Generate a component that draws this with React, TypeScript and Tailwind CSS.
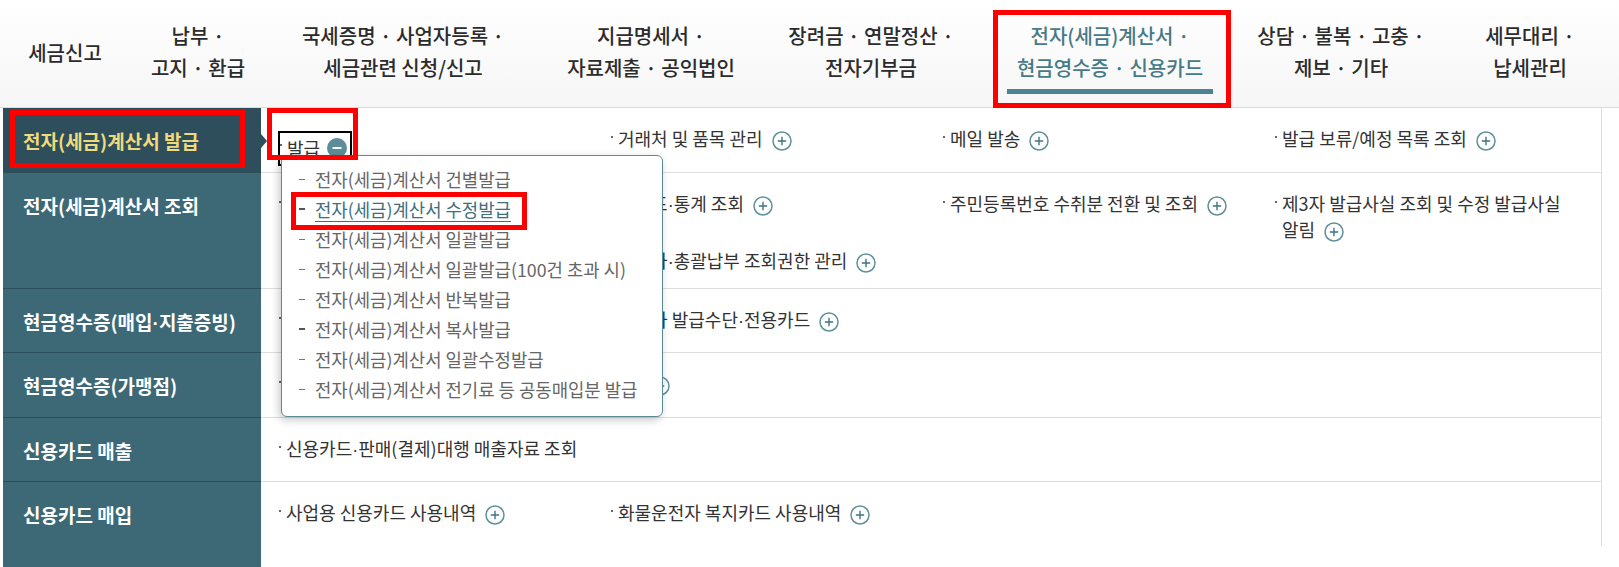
import React from "react";

const Dot = () => <span className="font-['Liberation_Sans',sans-serif]">·</span>;

const Plus = () => (
  <svg width="20" height="20" viewBox="0 0 20 20" className="ml-[9px] inline-block align-[-5px]">
    <circle cx="10" cy="10" r="9" fill="white" stroke="#5e909c" strokeWidth="1.5" />
    <path d="M10 5.8v8.4M5.8 10h8.4" stroke="#3f7482" strokeWidth="1.4" />
  </svg>
);

const Minus = () => (
  <svg width="20" height="20" viewBox="0 0 20 20" className="ml-[7px] shrink-0">
    <circle cx="10" cy="10" r="10" fill="#5b8e99" />
    <path d="M5.5 10h9" stroke="white" strokeWidth="2" />
  </svg>
);

function withDots(text: string) {
  const parts = text.split("·");
  return parts.map((p, i) => (
    <React.Fragment key={i}>
      {p}
      {i < parts.length - 1 && <Dot />}
    </React.Fragment>
  ));
}

function Item({ text, plus = true, nowrap = false }: { text: string; plus?: boolean; nowrap?: boolean }) {
  return (
    <div className="flex items-start">
      <span className="mr-[5px] mt-[11px] h-[2px] w-[2px] shrink-0 bg-[#666]" />
      <span className={`break-keep pr-[20px] leading-[26px] ${nowrap ? "whitespace-nowrap" : ""}`}>
        {withDots(text)}
        {plus && <Plus />}
      </span>
    </div>
  );
}

function HeadItem({ w, lines, active = false }: { w: string; lines: string[]; active?: boolean }) {
  return (
    <div className={`flex shrink-0 flex-col items-center ${w} ${lines.length === 1 ? "pt-[37px]" : "pt-[20px]"}`}>
      {lines.map((l, i) => (
        <span key={i} className={`whitespace-nowrap text-[20px] leading-[32px] font-medium ${active ? "text-[#467a87]" : "text-[#2b2b2b]"}`}>
          {l}
        </span>
      ))}
      {active && <span className="mt-[5px] h-[5px] w-[206px] bg-[#4b8390]" />}
    </div>
  );
}

function Row({
  h,
  label,
  active = false,
  last = false,
  children,
}: {
  h: string;
  label: string;
  active?: boolean;
  last?: boolean;
  children?: React.ReactNode;
}) {
  return (
    <div className={`flex ${h}`}>
      <div
        className={`relative w-[258px] shrink-0 pl-[20px] pt-[20px] text-[19px] font-bold leading-[26px] ${
          active ? "bg-[#2d4e5a] text-[#f0da7c]" : "bg-[#3d6875] text-white"
        } ${last ? "" : "border-b border-[#2c4f5b]"}`}
      >
        {withDots(label)}
        {active && (
          <span className="absolute right-[-6px] top-[26px] h-0 w-0 border-y-[7px] border-l-[6px] border-y-transparent border-l-[#2d4e5a]" />
        )}
      </div>
      <div className={`w-[1341px] border-r border-[#dddddd] pl-[18px] pt-[17px] text-[18px] text-[#333] ${last ? "" : "border-b"}`}>
        <div className="grid grid-cols-[332px_332px_332px_1fr]">{children}</div>
      </div>
    </div>
  );
}

export default function App() {
  return (
    <div className="relative h-[567px] w-[1619px] overflow-hidden bg-white font-['Noto_Sans_CJK_KR','Noto_Sans',sans-serif]">
      <header className="flex h-[108px] border-b border-[#dcdcdc] bg-linear-to-b from-white to-[#f6f6f6]">
        <HeadItem w="w-[130px]" lines={["세금신고"]} />
        <HeadItem w="w-[136px]" lines={["납부 ·", "고지 · 환급"]} />
        <HeadItem w="w-[274px]" lines={["국세증명 · 사업자등록 ·", "세금관련 신청/신고"]} />
        <HeadItem w="w-[222px]" lines={["지급명세서 ·", "자료제출 · 공익법인"]} />
        <HeadItem w="w-[218px]" lines={["장려금 · 연말정산 ·", "전자기부금"]} />
        <HeadItem w="w-[260px]" lines={["전자(세금)계산서 ·", "현금영수증 · 신용카드"]} active />
        <HeadItem w="w-[202px]" lines={["상담 · 불복 · 고충 ·", "제보 · 기타"]} />
        <HeadItem w="w-[176px]" lines={["세무대리 ·", "납세관리"]} />
      </header>

      <div className="flex">
        <div className="w-[3px] shrink-0" />
        <div className="w-[1599px]">
          <Row h="h-[65px]" label="전자(세금)계산서 발급" active>
            <div>
              <div className="-ml-[1px] -mt-[6px] inline-flex h-[35px] items-center border-2 border-black pr-[3px]">
                <span className="mb-[6px] mr-[5px] h-[2px] w-[2px] shrink-0 bg-[#666]" />
                <span className="leading-[26px]">발급</span>
                <Minus />
              </div>
            </div>
            <div>
              <Item text="거래처 및 품목 관리" />
            </div>
            <div>
              <Item text="메일 발송" />
            </div>
            <div>
              <Item text="발급 보류/예정 목록 조회" />
            </div>
          </Row>
          <Row h="h-[116px]" label="전자(세금)계산서 조회">
            <div>
              <Item text="목록조회" />
            </div>
            <div className="flex flex-col gap-[29px]">
              <Item text="합계표·통계 조회" />
              <Item text="사업자·총괄납부 조회권한 관리" />
            </div>
            <div>
              <Item text="주민등록번호 수취분 전환 및 조회" />
            </div>
            <div>
              <Item text="제3자 발급사실 조회 및 수정 발급사실 알림" />
            </div>
          </Row>
          <Row h="h-[64px]" label="현금영수증(매입·지출증빙)">
            <div>
              <Item text="현금영수증 조회" />
            </div>
            <div>
              <Item text="사업자 발급수단·전용카드" />
            </div>
          </Row>
          <Row h="h-[65px]" label="현금영수증(가맹점)">
            <div>
              <Item text="현금영수증 가맹점 발급수단 등록 및 발급분 조회" nowrap />
            </div>
          </Row>
          <Row h="h-[64px]" label="신용카드 매출">
            <div className="col-span-2">
              <Item text="신용카드·판매(결제)대행 매출자료 조회" plus={false} />
            </div>
          </Row>
          <Row h="h-[64px]" label="신용카드 매입" last>
            <div>
              <Item text="사업용 신용카드 사용내역" />
            </div>
            <div>
              <Item text="화물운전자 복지카드 사용내역" />
            </div>
          </Row>
          <div className="flex h-[21px]">
            <div className="w-[258px] bg-[#3d6875]" />
          </div>
        </div>
      </div>

      {/* dropdown menu */}
      <div className="absolute left-[281px] top-[155px] z-10 h-[262px] w-[382px] rounded-[6px] border border-[#5b8b97] bg-white pt-[8px] shadow-[-2px_3px_8px_rgba(0,0,0,0.22)]">
        {[
          "전자(세금)계산서 건별발급",
          "전자(세금)계산서 수정발급",
          "전자(세금)계산서 일괄발급",
          "전자(세금)계산서 일괄발급(100건 초과 시)",
          "전자(세금)계산서 반복발급",
          "전자(세금)계산서 복사발급",
          "전자(세금)계산서 일괄수정발급",
          "전자(세금)계산서 전기료 등 공동매입분 발급",
        ].map((t, i) => (
          <div key={i} className="flex h-[30px] items-center pl-[17px]">
            <span className={`mr-[10px] w-[6px] shrink-0 ${i === 1 || i === 5 ? "h-[2px] bg-[#555]" : "h-[1px] bg-[#777]"}`} />
            <span
              className={`whitespace-nowrap text-[17.8px] leading-[30px] ${
                i === 1 ? "text-[#3e6f7c] underline decoration-[#3e6f7c] underline-offset-[4px]" : "text-[#666]"
              }`}
            >
              {t}
            </span>
          </div>
        ))}
      </div>

      {/* red annotation boxes */}
      <div className="pointer-events-none absolute left-[993px] top-[10px] z-20 h-[98px] w-[238px] border-[5px] border-[#ff0000]" />
      <div className="pointer-events-none absolute left-[10px] top-[110px] z-20 h-[58px] w-[235px] border-[5px] border-[#ff0000]" />
      <div className="pointer-events-none absolute left-[267px] top-[108px] z-20 h-[52px] w-[91px] border-[5px] border-[#ff0000]" />
      <div className="pointer-events-none absolute left-[291px] top-[192px] z-20 h-[38px] w-[236px] border-[5px] border-[#ff0000]" />
    </div>
  );
}
